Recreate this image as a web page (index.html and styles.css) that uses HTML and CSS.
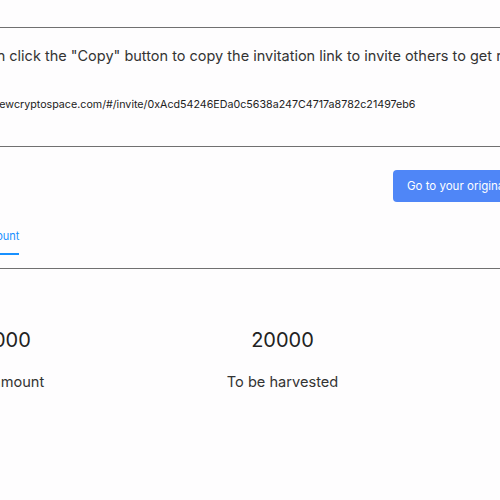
FILE: index.html
```html
<!DOCTYPE html>
<html>
<head>
    <title>Invite</title>
    <link rel="stylesheet" href="styles.css">
</head>
<body>
    <div class="page">
        <div class="invite-box">
            <p class="notice">You can click the "Copy" button to copy the invitation link to invite others to get rewards.</p>
            <p class="invite-link">https://newcryptospace.com/#/invite/0xAcd54246EDa0c5638a247C4717a8782c21497eb6</p>
        </div>

        <div class="toolbar">
            <button class="btn-primary">Go to your original account</button>
        </div>

        <div class="tabs">
            <span class="tab active">Account</span>
        </div>

        <div class="stats">
            <div class="stat">
                <div class="stat-value">20000</div>
                <div class="stat-label">Total amount</div>
            </div>
            <div class="stat">
                <div class="stat-value">20000</div>
                <div class="stat-label">To be harvested</div>
            </div>
            <div class="stat">
                <div class="stat-value">0</div>
                <div class="stat-label">Harvested</div>
            </div>
        </div>
    </div>
</body>
</html>
```

FILE: styles.css
```css
html, body { margin: 0; background: #fefdfe; overflow: hidden; }
body { font-family: Inter, "Noto Sans", sans-serif; color: #333; }
.page { width: 1000px; padding-top: 27px; }
.invite-box { border-top: 1px solid #707070; border-bottom: 1px solid #707070; padding: 18px 0 34px; }
.notice { margin: 0 0 32px -50px; font-size: 14.5px; line-height: 20px; white-space: nowrap; }
.invite-link { margin: 0 0 0 -43px; font-size: 10.7px; line-height: 14px; white-space: nowrap; color: #222; }
.toolbar { display: flex; padding: 23px 0 0 393px; }
.btn-primary { font-family: inherit; font-size: 11.5px; height: 32px; padding: 0 14px; border: none; border-radius: 4px; background: #4f86f7; color: #fff; white-space: nowrap; }
.tabs { display: flex; margin-top: 26px; margin-left: -24px; border-bottom: 1px solid #707070; padding-bottom: 13px; }
.tab { font-size: 11px; line-height: 16px; padding-bottom: 9px; border-bottom: 2px solid transparent; }
.tab.active { color: #1890ff; border-bottom-color: #1890ff; }
.stats { display: grid; grid-template-columns: repeat(3, 283px); margin: 57px 0 0 -142px; text-align: center; }
.stat-value { font-size: 20px; line-height: 28px; color: #222; }
.stat-label { margin-top: 18px; font-size: 14.6px; line-height: 20px; }
```
